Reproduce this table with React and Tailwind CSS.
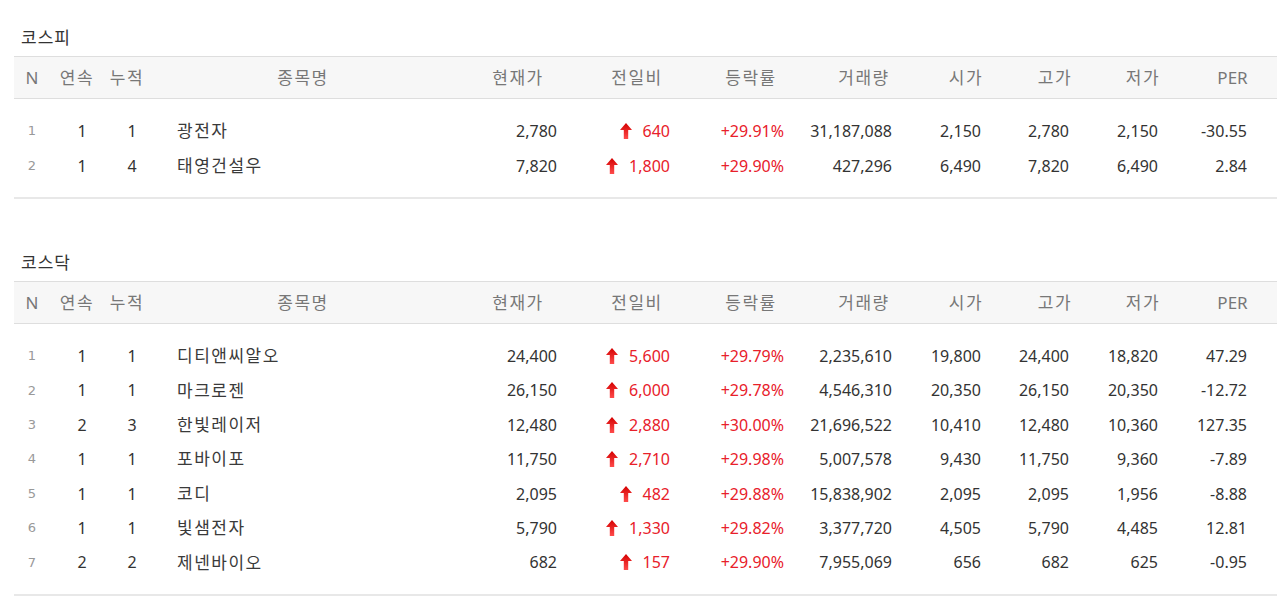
import React from 'react';

const kospi = [
  ['1', '1', '1', '광전자', '2,780', '640', '+29.91%', '31,187,088', '2,150', '2,780', '2,150', '-30.55'],
  ['2', '1', '4', '태영건설우', '7,820', '1,800', '+29.90%', '427,296', '6,490', '7,820', '6,490', '2.84'],
];

const kosdaq = [
  ['1', '1', '1', '디티앤씨알오', '24,400', '5,600', '+29.79%', '2,235,610', '19,800', '24,400', '18,820', '47.29'],
  ['2', '1', '1', '마크로젠', '26,150', '6,000', '+29.78%', '4,546,310', '20,350', '26,150', '20,350', '-12.72'],
  ['3', '2', '3', '한빛레이저', '12,480', '2,880', '+30.00%', '21,696,522', '10,410', '12,480', '10,360', '127.35'],
  ['4', '1', '1', '포바이포', '11,750', '2,710', '+29.98%', '5,007,578', '9,430', '11,750', '9,360', '-7.89'],
  ['5', '1', '1', '코디', '2,095', '482', '+29.88%', '15,838,902', '2,095', '2,095', '1,956', '-8.88'],
  ['6', '1', '1', '빛샘전자', '5,790', '1,330', '+29.82%', '3,377,720', '4,505', '5,790', '4,485', '12.81'],
  ['7', '2', '2', '제넨바이오', '682', '157', '+29.90%', '7,955,069', '656', '682', '625', '-0.95'],
];

const headers = ['N', '연속', '누적', '종목명', '현재가', '전일비', '등락률', '거래량', '시가', '고가', '저가', 'PER'];

const cols = 'grid grid-cols-[36px_54px_46px_306px_124px_114px_114px_112px_92px_86px_90px_89px]';

const UpArrow = () => (
  <svg width="12" height="16" viewBox="0 0 12 16" className="shrink-0">
    <defs>
      <linearGradient id="upg" x1="0" y1="0" x2="0" y2="1">
        <stop offset="0" stopColor="#d40000" />
        <stop offset="1" stopColor="#ff4b4b" />
      </linearGradient>
    </defs>
    <path d="M6 0 L12 7 L8.2 7 L8.2 16 L3.8 16 L3.8 7 L0 7 Z" fill="url(#upg)" />
  </svg>
);

const StockTable = ({ title, rows, first }) => (
  <div>
    <div className={`${first ? 'pt-[26px]' : 'pt-[52px]'} pl-[7px] text-[17px] leading-[24px] tracking-[1px] text-[#333] mb-[6px]`}>
      {title}
    </div>
    <div className={`${cols} h-[43px] items-center bg-[#f7f7f7] border-t border-b border-[#dedede] text-[17px] text-[#777]`}>
      {headers.map((h, i) => (
        <div key={h} className={i === 0 || i === 11 ? 'text-center' : 'text-center tracking-[1.5px]'}>
          {h}
        </div>
      ))}
    </div>
    <div className="pt-[15px] pb-[14px] border-b-2 border-[#e8e8e8]">
      {rows.map((r) => (
        <div key={r[0]} className={`${cols} h-[34.4px] items-center text-[16px] text-[#333]`}>
          <div className="text-center text-[13px] text-[#999] font-['DejaVu_Sans',sans-serif]">{r[0]}</div>
          <div className="text-center pl-[10px]">{r[1]}</div>
          <div className="text-center pl-[10px]">{r[2]}</div>
          <div className="pl-[27px] text-[17px] tracking-[1.5px] text-[#3a3a3a]">{r[3]}</div>
          <div className="text-right pr-[23px]">{r[4]}</div>
          <div className="flex items-center justify-end pr-[24px] text-[#e8202a]">
            <UpArrow />
            <span className="ml-[11px]">{r[5]}</span>
          </div>
          <div className="text-right pr-[24px] text-[#e8202a]">{r[6]}</div>
          <div className="text-right pr-[28px]">{r[7]}</div>
          <div className="text-right pr-[31px]">{r[8]}</div>
          <div className="text-right pr-[29px]">{r[9]}</div>
          <div className="text-right pr-[30px]">{r[10]}</div>
          <div className="text-right pr-[30px]">{r[11]}</div>
        </div>
      ))}
    </div>
  </div>
);

export default function App() {
  return (
    <div className="w-[1280px] min-h-[609px] bg-white pl-[14px] font-['Noto_Sans','Noto_Sans_CJK_KR',sans-serif]">
      <div className="w-[1263px]">
        <StockTable title="코스피" rows={kospi} first />
        <StockTable title="코스닥" rows={kosdaq} />
      </div>
    </div>
  );
}
